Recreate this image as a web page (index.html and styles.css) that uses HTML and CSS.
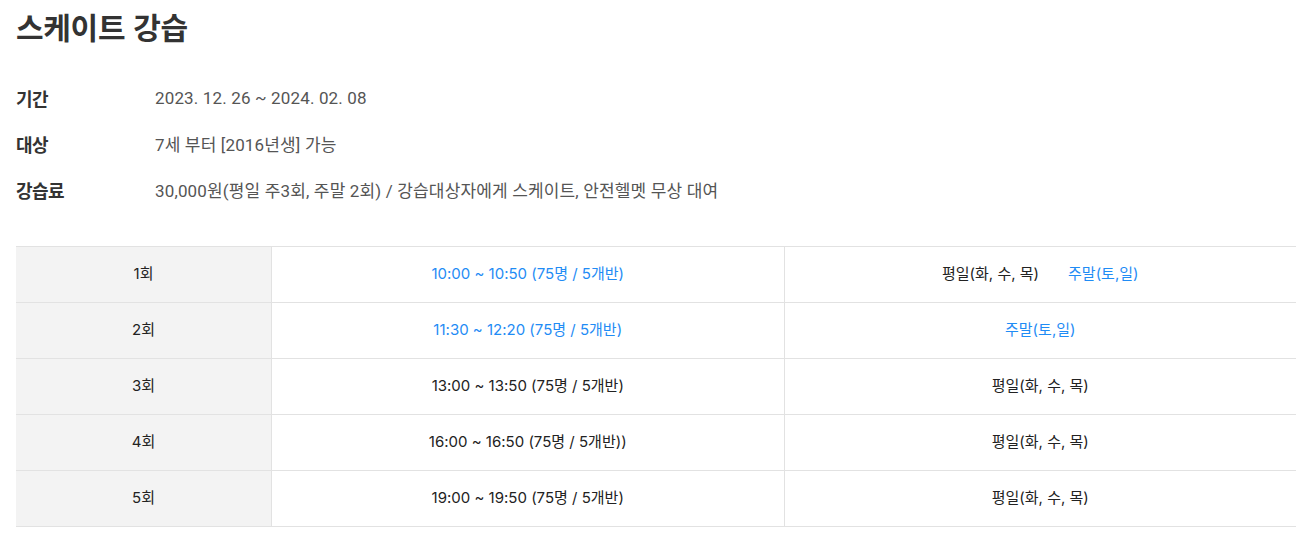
FILE: index.html
```html
<!DOCTYPE html>
<html lang="ko">
<head>
<meta charset="utf-8">
<link rel="stylesheet" href="styles.css">
</head>
<body>
<div class="page">
  <h1 class="title">스케이트 강습</h1>
  <dl class="info">
    <div class="info-row"><dt>기간</dt><dd>2023. 12. 26 ~ 2024. 02. 08</dd></div>
    <div class="info-row"><dt>대상</dt><dd>7세 부터 [2016년생] 가능</dd></div>
    <div class="info-row"><dt>강습료</dt><dd>30,000원(평일 주3회, 주말 2회) / 강습대상자에게 스케이트, 안전헬멧 무상 대여</dd></div>
  </dl>
  <div class="table">
    <div class="cell head">1회</div>
    <div class="cell blue">10:00 ~ 10:50 (75명 / 5개반)</div>
    <div class="cell days"><span>평일(화, 수, 목)</span><span class="blue">주말(토,일)</span></div>

    <div class="cell head">2회</div>
    <div class="cell blue">11:30 ~ 12:20 (75명 / 5개반)</div>
    <div class="cell blue">주말(토,일)</div>

    <div class="cell head">3회</div>
    <div class="cell">13:00 ~ 13:50 (75명 / 5개반)</div>
    <div class="cell">평일(화, 수, 목)</div>

    <div class="cell head">4회</div>
    <div class="cell">16:00 ~ 16:50 (75명 / 5개반))</div>
    <div class="cell">평일(화, 수, 목)</div>

    <div class="cell head">5회</div>
    <div class="cell">19:00 ~ 19:50 (75명 / 5개반)</div>
    <div class="cell">평일(화, 수, 목)</div>
  </div>
</div>
</body>
</html>
```
FILE: styles.css
```css
* { box-sizing: border-box; }
html, body { margin: 0; padding: 0; background: #fff; }
body {
  font-family: Inter, "Noto Sans CJK KR", sans-serif;
  color: #222;
}
.page { padding: 6px 18px 0 16px; }
.title {
  margin: 0;
  font-family: "Noto Sans CJK KR", sans-serif;
  font-size: 30px;
  line-height: 40px;
  font-weight: 700;
  color: #333;
  letter-spacing: -0.3px;
}
.info { margin: 29px 0 0; padding: 0; }
.info-row {
  display: flex;
  align-items: center;
  height: 46px;
  padding-bottom: 1px;
}
.info dt {
  width: 139px;
  font-family: "Noto Sans CJK KR", sans-serif;
  font-size: 18px;
  font-weight: 700;
  color: #333;
  letter-spacing: -0.5px;
}
.info dd {
  margin: 0;
  font-family: Roboto, "Noto Sans CJK KR", sans-serif;
  font-size: 17px;
  color: #555;
  letter-spacing: 0.15px;
}
.table {
  margin-top: 33px;
  display: grid;
  grid-template-columns: 255px 1fr 1fr;
  border-top: 1px solid #e2e2e2;
}
.cell {
  height: 56px;
  display: flex;
  align-items: center;
  justify-content: center;
  padding-bottom: 2px;
  font-size: 15px;
  line-height: 20px;
  color: #222;
  border-bottom: 1px solid #e2e2e2;
  border-left: 1px solid #e2e2e2;
}
.cell.head { background: #f3f3f3; border-left: none; }
.blue { color: #1f8cf5; }
.days { gap: 29px; }
```
